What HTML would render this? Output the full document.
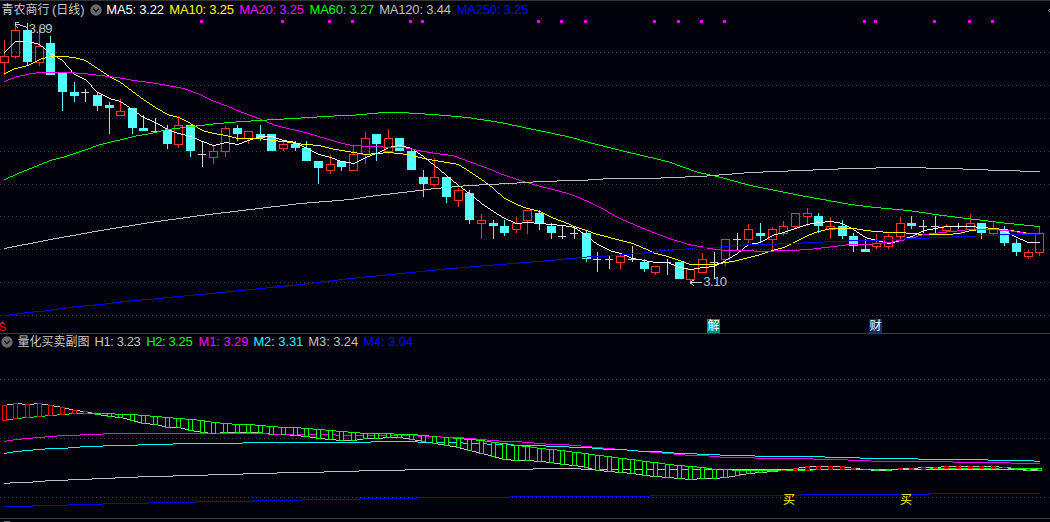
<!DOCTYPE html>
<html><head><meta charset="utf-8"><title>青农商行(日线)</title>
<style>
html,body{margin:0;padding:0;background:#02020c;}
body{width:1050px;height:522px;position:relative;overflow:hidden;font-family:"Liberation Sans","Noto Sans CJK SC",sans-serif;}
.t{position:absolute;font-size:13px;letter-spacing:-0.2px;line-height:16px;white-space:nowrap;}
.c{font-size:12px;letter-spacing:0;}
.tag{position:absolute;width:13px;height:14px;color:#fff;font-size:12px;line-height:14px;text-align:center;overflow:hidden;}
</style></head><body>
<svg width="1050" height="522" viewBox="0 0 1050 522" shape-rendering="crispEdges" style="position:absolute;left:0;top:0"><line x1="0" y1="52.5" x2="1050" y2="52.5" stroke="#404042" stroke-width="1" stroke-dasharray="1 3"/>
<line x1="0" y1="85.5" x2="1050" y2="85.5" stroke="#404042" stroke-width="1" stroke-dasharray="1 3"/>
<line x1="0" y1="118.5" x2="1050" y2="118.5" stroke="#404042" stroke-width="1" stroke-dasharray="1 3"/>
<line x1="0" y1="151.5" x2="1050" y2="151.5" stroke="#404042" stroke-width="1" stroke-dasharray="1 3"/>
<line x1="0" y1="184.5" x2="1050" y2="184.5" stroke="#404042" stroke-width="1" stroke-dasharray="1 3"/>
<line x1="0" y1="216.5" x2="1050" y2="216.5" stroke="#404042" stroke-width="1" stroke-dasharray="1 3"/>
<line x1="0" y1="249.5" x2="1050" y2="249.5" stroke="#404042" stroke-width="1" stroke-dasharray="1 3"/>
<line x1="0" y1="282.5" x2="1050" y2="282.5" stroke="#404042" stroke-width="1" stroke-dasharray="1 3"/>
<line x1="0" y1="315.5" x2="1050" y2="315.5" stroke="#404042" stroke-width="1" stroke-dasharray="1 3"/>
<line x1="0" y1="379.5" x2="1050" y2="379.5" stroke="#404042" stroke-width="1" stroke-dasharray="1 3"/>
<line x1="0" y1="438.5" x2="1050" y2="438.5" stroke="#404042" stroke-width="1" stroke-dasharray="1 3"/>
<line x1="0" y1="497.5" x2="1050" y2="497.5" stroke="#404042" stroke-width="1" stroke-dasharray="1 3"/>
<rect x="0" y="0" width="1050" height="1" fill="#333333"/>
<rect x="0" y="333" width="1050" height="1" fill="#3c3c3c"/>
<rect x="0" y="518" width="1050" height="1" fill="#3c3c3c"/>
<rect x="4" y="40" width="1" height="16" fill="#ff3232"/>
<rect x="4" y="63" width="1" height="12" fill="#ff3232"/>
<path d="M0 56h9v7h-9z M1 57v5h7v-5z" fill="#ff3232" fill-rule="evenodd"/>
<rect x="15" y="26" width="1" height="4" fill="#ff3232"/>
<rect x="15" y="57" width="1" height="2" fill="#ff3232"/>
<path d="M11 30h9v27h-9z M12 31v25h7v-25z" fill="#ff3232" fill-rule="evenodd"/>
<rect x="27" y="23" width="1" height="42" fill="#54ffff"/>
<rect x="23" y="30" width="9" height="32" fill="#54ffff"/>
<rect x="39" y="27" width="1" height="19" fill="#ff3232"/>
<rect x="39" y="63" width="1" height="3" fill="#ff3232"/>
<path d="M35 46h9v17h-9z M36 47v15h7v-15z" fill="#ff3232" fill-rule="evenodd"/>
<rect x="50" y="36" width="1" height="39" fill="#54ffff"/>
<rect x="46" y="43" width="9" height="32" fill="#54ffff"/>
<rect x="62" y="73" width="1" height="38" fill="#54ffff"/>
<rect x="58" y="73" width="9" height="19" fill="#54ffff"/>
<rect x="74" y="82" width="1" height="20" fill="#54ffff"/>
<rect x="70" y="92" width="9" height="4" fill="#54ffff"/>
<rect x="85" y="89" width="1" height="13" fill="#d0d0d0"/>
<rect x="81" y="92" width="8" height="1" fill="#d0d0d0"/>
<rect x="97" y="92" width="1" height="19" fill="#54ffff"/>
<rect x="93" y="95" width="9" height="11" fill="#54ffff"/>
<rect x="109" y="102" width="1" height="32" fill="#54ffff"/>
<rect x="105" y="105" width="9" height="3" fill="#54ffff"/>
<rect x="120" y="99" width="1" height="12" fill="#ff3232"/>
<path d="M116 111h9v5h-9z M117 112v3h7v-3z" fill="#ff3232" fill-rule="evenodd"/>
<rect x="132" y="108" width="1" height="26" fill="#54ffff"/>
<rect x="128" y="108" width="9" height="20" fill="#54ffff"/>
<rect x="143" y="115" width="1" height="16" fill="#54ffff"/>
<rect x="139" y="128" width="9" height="3" fill="#54ffff"/>
<rect x="155" y="118" width="1" height="15" fill="#d0d0d0"/>
<rect x="151" y="131" width="8" height="1" fill="#d0d0d0"/>
<rect x="167" y="125" width="1" height="24" fill="#54ffff"/>
<rect x="163" y="130" width="9" height="14" fill="#54ffff"/>
<rect x="178" y="116" width="1" height="9" fill="#ff3232"/>
<rect x="178" y="145" width="1" height="3" fill="#ff3232"/>
<path d="M174 125h9v20h-9z M175 126v18h7v-18z" fill="#ff3232" fill-rule="evenodd"/>
<rect x="190" y="125" width="1" height="32" fill="#54ffff"/>
<rect x="186" y="125" width="9" height="26" fill="#54ffff"/>
<rect x="202" y="141" width="1" height="26" fill="#d0d0d0"/>
<rect x="198" y="154" width="8" height="1" fill="#d0d0d0"/>
<rect x="213" y="145" width="1" height="6" fill="#ff3232"/>
<rect x="213" y="158" width="1" height="6" fill="#ff3232"/>
<path d="M209 151h9v7h-9z M210 152v5h7v-5z" fill="#ff3232" fill-rule="evenodd"/>
<rect x="225" y="126" width="1" height="2" fill="#ff3232"/>
<rect x="225" y="152" width="1" height="5" fill="#ff3232"/>
<path d="M221 128h9v24h-9z M222 129v22h7v-22z" fill="#ff3232" fill-rule="evenodd"/>
<rect x="237" y="125" width="1" height="16" fill="#54ffff"/>
<rect x="233" y="128" width="9" height="6" fill="#54ffff"/>
<rect x="248" y="139" width="1" height="5" fill="#ff3232"/>
<path d="M244 131h9v8h-9z M245 132v6h7v-6z" fill="#ff3232" fill-rule="evenodd"/>
<rect x="260" y="125" width="1" height="16" fill="#54ffff"/>
<rect x="256" y="134" width="9" height="4" fill="#54ffff"/>
<rect x="271" y="134" width="1" height="17" fill="#54ffff"/>
<rect x="267" y="134" width="9" height="17" fill="#54ffff"/>
<rect x="283" y="141" width="1" height="3" fill="#ff3232"/>
<rect x="283" y="149" width="1" height="2" fill="#ff3232"/>
<path d="M279 144h9v5h-9z M280 145v3h7v-3z" fill="#ff3232" fill-rule="evenodd"/>
<rect x="295" y="141" width="1" height="10" fill="#54ffff"/>
<rect x="291" y="144" width="9" height="4" fill="#54ffff"/>
<rect x="306" y="141" width="1" height="20" fill="#54ffff"/>
<rect x="302" y="148" width="9" height="13" fill="#54ffff"/>
<rect x="318" y="161" width="1" height="23" fill="#54ffff"/>
<rect x="314" y="161" width="9" height="7" fill="#54ffff"/>
<rect x="330" y="155" width="1" height="9" fill="#ff3232"/>
<rect x="330" y="171" width="1" height="3" fill="#ff3232"/>
<path d="M326 164h9v7h-9z M327 165v5h7v-5z" fill="#ff3232" fill-rule="evenodd"/>
<rect x="341" y="161" width="1" height="10" fill="#54ffff"/>
<rect x="337" y="161" width="9" height="6" fill="#54ffff"/>
<rect x="353" y="146" width="1" height="8" fill="#ff3232"/>
<path d="M349 154h9v17h-9z M350 155v15h7v-15z" fill="#ff3232" fill-rule="evenodd"/>
<rect x="365" y="132" width="1" height="6" fill="#ff3232"/>
<rect x="365" y="155" width="1" height="9" fill="#ff3232"/>
<path d="M361 138h9v17h-9z M362 139v15h7v-15z" fill="#ff3232" fill-rule="evenodd"/>
<rect x="376" y="134" width="1" height="27" fill="#54ffff"/>
<rect x="372" y="134" width="9" height="10" fill="#54ffff"/>
<rect x="388" y="129" width="1" height="9" fill="#ff3232"/>
<rect x="388" y="152" width="1" height="2" fill="#ff3232"/>
<path d="M384 138h9v14h-9z M385 139v12h7v-12z" fill="#ff3232" fill-rule="evenodd"/>
<rect x="399" y="138" width="1" height="13" fill="#54ffff"/>
<rect x="395" y="138" width="9" height="13" fill="#54ffff"/>
<rect x="411" y="148" width="1" height="22" fill="#54ffff"/>
<rect x="407" y="151" width="9" height="19" fill="#54ffff"/>
<rect x="423" y="170" width="1" height="27" fill="#54ffff"/>
<rect x="419" y="177" width="9" height="7" fill="#54ffff"/>
<rect x="434" y="158" width="1" height="19" fill="#ff3232"/>
<rect x="434" y="185" width="1" height="2" fill="#ff3232"/>
<path d="M430 177h9v8h-9z M431 178v6h7v-6z" fill="#ff3232" fill-rule="evenodd"/>
<rect x="446" y="177" width="1" height="26" fill="#54ffff"/>
<rect x="442" y="177" width="9" height="20" fill="#54ffff"/>
<rect x="458" y="188" width="1" height="2" fill="#ff3232"/>
<rect x="458" y="201" width="1" height="6" fill="#ff3232"/>
<path d="M454 190h9v11h-9z M455 191v9h7v-9z" fill="#ff3232" fill-rule="evenodd"/>
<rect x="469" y="190" width="1" height="34" fill="#54ffff"/>
<rect x="465" y="193" width="9" height="27" fill="#54ffff"/>
<rect x="481" y="214" width="1" height="6" fill="#ff3232"/>
<rect x="481" y="224" width="1" height="15" fill="#ff3232"/>
<path d="M477 220h9v4h-9z M478 221v2h7v-2z" fill="#ff3232" fill-rule="evenodd"/>
<rect x="493" y="220" width="1" height="19" fill="#54ffff"/>
<rect x="489" y="223" width="9" height="3" fill="#54ffff"/>
<rect x="504" y="220" width="1" height="16" fill="#54ffff"/>
<rect x="500" y="226" width="9" height="7" fill="#54ffff"/>
<rect x="516" y="217" width="1" height="6" fill="#ff3232"/>
<rect x="516" y="230" width="1" height="3" fill="#ff3232"/>
<path d="M512 223h9v7h-9z M513 224v5h7v-5z" fill="#ff3232" fill-rule="evenodd"/>
<rect x="527" y="221" width="1" height="13" fill="#ff3232"/>
<path d="M523 210h9v11h-9z M524 211v9h7v-9z" fill="#ff3232" fill-rule="evenodd"/>
<rect x="539" y="210" width="1" height="20" fill="#54ffff"/>
<rect x="535" y="213" width="9" height="11" fill="#54ffff"/>
<rect x="551" y="223" width="1" height="16" fill="#54ffff"/>
<rect x="547" y="226" width="9" height="7" fill="#54ffff"/>
<rect x="562" y="225" width="1" height="14" fill="#d0d0d0"/>
<rect x="558" y="236" width="8" height="1" fill="#d0d0d0"/>
<rect x="574" y="227" width="1" height="12" fill="#d0d0d0"/>
<rect x="570" y="233" width="8" height="1" fill="#d0d0d0"/>
<rect x="586" y="230" width="1" height="32" fill="#54ffff"/>
<rect x="582" y="233" width="9" height="26" fill="#54ffff"/>
<rect x="597" y="252" width="1" height="20" fill="#d0d0d0"/>
<rect x="593" y="259" width="8" height="1" fill="#d0d0d0"/>
<rect x="609" y="255" width="1" height="14" fill="#d0d0d0"/>
<rect x="605" y="259" width="8" height="1" fill="#d0d0d0"/>
<rect x="620" y="255" width="1" height="1" fill="#ff3232"/>
<rect x="620" y="263" width="1" height="6" fill="#ff3232"/>
<path d="M616 256h9v7h-9z M617 257v5h7v-5z" fill="#ff3232" fill-rule="evenodd"/>
<rect x="632" y="246" width="1" height="16" fill="#d0d0d0"/>
<rect x="628" y="259" width="8" height="1" fill="#d0d0d0"/>
<rect x="644" y="259" width="1" height="13" fill="#54ffff"/>
<rect x="640" y="262" width="9" height="7" fill="#54ffff"/>
<rect x="655" y="273" width="1" height="2" fill="#ff3232"/>
<path d="M651 266h9v7h-9z M652 267v5h7v-5z" fill="#ff3232" fill-rule="evenodd"/>
<rect x="667" y="259" width="1" height="16" fill="#d0d0d0"/>
<rect x="663" y="262" width="8" height="1" fill="#d0d0d0"/>
<rect x="679" y="262" width="1" height="17" fill="#54ffff"/>
<rect x="675" y="262" width="9" height="17" fill="#54ffff"/>
<rect x="690" y="280" width="1" height="4" fill="#ff3232"/>
<path d="M686 269h9v11h-9z M687 270v9h7v-9z" fill="#ff3232" fill-rule="evenodd"/>
<rect x="702" y="253" width="1" height="6" fill="#ff3232"/>
<path d="M698 259h9v14h-9z M699 260v12h7v-12z" fill="#ff3232" fill-rule="evenodd"/>
<rect x="714" y="252" width="1" height="27" fill="#d0d0d0"/>
<rect x="710" y="262" width="8" height="1" fill="#d0d0d0"/>
<rect x="725" y="260" width="1" height="6" fill="#ff3232"/>
<path d="M721 239h9v21h-9z M722 240v19h7v-19z" fill="#ff3232" fill-rule="evenodd"/>
<rect x="737" y="233" width="1" height="17" fill="#d0d0d0"/>
<rect x="733" y="239" width="8" height="1" fill="#d0d0d0"/>
<rect x="748" y="224" width="1" height="5" fill="#ff3232"/>
<rect x="748" y="240" width="1" height="3" fill="#ff3232"/>
<path d="M744 229h9v11h-9z M745 230v9h7v-9z" fill="#ff3232" fill-rule="evenodd"/>
<rect x="760" y="223" width="1" height="20" fill="#54ffff"/>
<rect x="756" y="233" width="9" height="3" fill="#54ffff"/>
<rect x="772" y="227" width="1" height="2" fill="#ff3232"/>
<rect x="772" y="240" width="1" height="10" fill="#ff3232"/>
<path d="M768 229h9v11h-9z M769 230v9h7v-9z" fill="#ff3232" fill-rule="evenodd"/>
<rect x="783" y="221" width="1" height="5" fill="#ff3232"/>
<rect x="783" y="234" width="1" height="2" fill="#ff3232"/>
<path d="M779 226h9v8h-9z M780 227v6h7v-6z" fill="#ff3232" fill-rule="evenodd"/>
<rect x="795" y="227" width="1" height="2" fill="#ff3232"/>
<path d="M791 213h9v14h-9z M792 214v12h7v-12z" fill="#ff3232" fill-rule="evenodd"/>
<rect x="807" y="208" width="1" height="5" fill="#ff3232"/>
<rect x="807" y="217" width="1" height="9" fill="#ff3232"/>
<path d="M803 213h9v4h-9z M804 214v2h7v-2z" fill="#ff3232" fill-rule="evenodd"/>
<rect x="818" y="213" width="1" height="20" fill="#54ffff"/>
<rect x="814" y="216" width="9" height="10" fill="#54ffff"/>
<rect x="830" y="217" width="1" height="9" fill="#ff3232"/>
<rect x="830" y="230" width="1" height="9" fill="#ff3232"/>
<path d="M826 226h9v4h-9z M827 227v2h7v-2z" fill="#ff3232" fill-rule="evenodd"/>
<rect x="842" y="220" width="1" height="19" fill="#54ffff"/>
<rect x="838" y="226" width="9" height="10" fill="#54ffff"/>
<rect x="853" y="233" width="1" height="19" fill="#54ffff"/>
<rect x="849" y="236" width="9" height="10" fill="#54ffff"/>
<rect x="865" y="239" width="1" height="13" fill="#54ffff"/>
<rect x="861" y="249" width="9" height="3" fill="#54ffff"/>
<rect x="876" y="234" width="1" height="9" fill="#ff3232"/>
<rect x="876" y="247" width="1" height="2" fill="#ff3232"/>
<path d="M872 243h9v4h-9z M873 244v2h7v-2z" fill="#ff3232" fill-rule="evenodd"/>
<rect x="888" y="234" width="1" height="2" fill="#ff3232"/>
<rect x="888" y="247" width="1" height="2" fill="#ff3232"/>
<path d="M884 236h9v11h-9z M885 237v9h7v-9z" fill="#ff3232" fill-rule="evenodd"/>
<rect x="900" y="217" width="1" height="6" fill="#ff3232"/>
<rect x="900" y="237" width="1" height="2" fill="#ff3232"/>
<path d="M896 223h9v14h-9z M897 224v12h7v-12z" fill="#ff3232" fill-rule="evenodd"/>
<rect x="911" y="216" width="1" height="13" fill="#54ffff"/>
<rect x="907" y="223" width="9" height="3" fill="#54ffff"/>
<rect x="923" y="220" width="1" height="13" fill="#d0d0d0"/>
<rect x="919" y="226" width="8" height="1" fill="#d0d0d0"/>
<rect x="935" y="216" width="1" height="18" fill="#d0d0d0"/>
<rect x="931" y="226" width="8" height="1" fill="#d0d0d0"/>
<rect x="946" y="224" width="1" height="2" fill="#ff3232"/>
<rect x="946" y="231" width="1" height="2" fill="#ff3232"/>
<path d="M942 226h9v5h-9z M943 227v3h7v-3z" fill="#ff3232" fill-rule="evenodd"/>
<rect x="958" y="223" width="1" height="6" fill="#d0d0d0"/>
<rect x="954" y="226" width="8" height="1" fill="#d0d0d0"/>
<rect x="970" y="214" width="1" height="9" fill="#ff3232"/>
<rect x="970" y="230" width="1" height="1" fill="#ff3232"/>
<path d="M966 223h9v7h-9z M967 224v5h7v-5z" fill="#ff3232" fill-rule="evenodd"/>
<rect x="981" y="223" width="1" height="16" fill="#54ffff"/>
<rect x="977" y="223" width="9" height="10" fill="#54ffff"/>
<rect x="993" y="221" width="1" height="7" fill="#ff3232"/>
<rect x="993" y="234" width="1" height="2" fill="#ff3232"/>
<path d="M989 228h9v6h-9z M990 229v4h7v-4z" fill="#ff3232" fill-rule="evenodd"/>
<rect x="1004" y="226" width="1" height="20" fill="#54ffff"/>
<rect x="1000" y="230" width="9" height="13" fill="#54ffff"/>
<rect x="1016" y="239" width="1" height="17" fill="#54ffff"/>
<rect x="1012" y="243" width="9" height="9" fill="#54ffff"/>
<rect x="1028" y="250" width="1" height="2" fill="#ff3232"/>
<rect x="1028" y="257" width="1" height="2" fill="#ff3232"/>
<path d="M1024 252h9v5h-9z M1025 253v3h7v-3z" fill="#ff3232" fill-rule="evenodd"/>
<rect x="1039" y="227" width="1" height="6" fill="#ff3232"/>
<rect x="1039" y="253" width="1" height="3" fill="#ff3232"/>
<path d="M1035 233h9v20h-9z M1036 234v18h7v-18z" fill="#ff3232" fill-rule="evenodd"/>
<rect x="200" y="20" width="3" height="3" fill="#ff00ff"/>
<rect x="281" y="20" width="3" height="3" fill="#ff00ff"/>
<rect x="328" y="20" width="3" height="3" fill="#ff00ff"/>
<rect x="351" y="20" width="3" height="3" fill="#ff00ff"/>
<rect x="409" y="20" width="3" height="3" fill="#ff00ff"/>
<rect x="421" y="20" width="3" height="3" fill="#ff00ff"/>
<rect x="537" y="20" width="3" height="3" fill="#ff00ff"/>
<rect x="560" y="20" width="3" height="3" fill="#ff00ff"/>
<rect x="584" y="20" width="3" height="3" fill="#ff00ff"/>
<rect x="653" y="20" width="3" height="3" fill="#ff00ff"/>
<rect x="677" y="20" width="3" height="3" fill="#ff00ff"/>
<rect x="700" y="20" width="3" height="3" fill="#ff00ff"/>
<rect x="723" y="20" width="3" height="3" fill="#ff00ff"/>
<rect x="863" y="20" width="3" height="3" fill="#ff00ff"/>
<rect x="874" y="20" width="3" height="3" fill="#ff00ff"/>
<rect x="933" y="20" width="3" height="3" fill="#ff00ff"/>
<rect x="968" y="20" width="3" height="3" fill="#ff00ff"/>
<rect x="991" y="20" width="3" height="3" fill="#ff00ff"/>
<path d="M15 41h15v1h-15zM14 42h1v1h-1zM30 42h4v1h-4zM13 43h1v1h-1zM34 43h4v1h-4zM12 44h1v1h-1zM38 44h2v1h-2zM11 45h1v1h-1zM40 45h1v1h-1zM10 46h1v1h-1zM41 46h2v1h-2zM9 47h1v1h-1zM43 47h1v1h-1zM8 48h1v1h-1zM44 48h1v1h-1zM7 49h1v1h-1zM45 49h1v1h-1zM6 50h1v1h-1zM46 50h1v1h-1zM5 51h1v1h-1zM47 51h2v1h-2zM4 52h1v1h-1zM49 52h1v1h-1zM50 53h1v1h-1zM51 54h2v1h-2zM53 55h2v1h-2zM55 56h2v1h-2zM57 57h1v1h-1zM58 58h2v1h-2zM60 59h2v1h-2zM62 60h1v1h-1zM63 61h1v1h-1zM64 62h1v1h-1zM65 63h1v1h-1zM65 64h1v1h-1zM66 65h1v1h-1zM67 66h1v1h-1zM68 67h1v1h-1zM69 68h1v1h-1zM70 69h1v1h-1zM71 70h1v1h-1zM71 71h1v1h-1zM72 72h1v1h-1zM73 73h1v1h-1zM74 74h2v1h-2zM76 75h2v1h-2zM78 76h2v1h-2zM80 77h2v1h-2zM82 78h2v1h-2zM84 79h2v1h-2zM86 80h1v1h-1zM87 81h1v1h-1zM88 82h1v1h-1zM89 83h1v1h-1zM90 84h1v1h-1zM91 85h1v1h-1zM91 86h1v1h-1zM92 87h1v1h-1zM93 88h1v1h-1zM94 89h1v1h-1zM95 90h1v1h-1zM96 91h1v1h-1zM97 92h2v1h-2zM99 93h2v1h-2zM101 94h2v1h-2zM103 95h2v1h-2zM105 96h2v1h-2zM107 97h2v1h-2zM109 98h2v1h-2zM111 99h4v1h-4zM115 100h4v1h-4zM119 101h2v1h-2zM121 102h2v1h-2zM123 103h1v1h-1zM124 104h2v1h-2zM126 105h1v1h-1zM127 106h2v1h-2zM129 107h1v1h-1zM130 108h2v1h-2zM132 109h1v1h-1zM133 110h2v1h-2zM135 111h1v1h-1zM136 112h1v1h-1zM137 113h2v1h-2zM139 114h1v1h-1zM140 115h1v1h-1zM141 116h2v1h-2zM143 117h2v1h-2zM145 118h2v1h-2zM147 119h3v1h-3zM150 120h2v1h-2zM152 121h2v1h-2zM154 122h2v1h-2zM156 123h2v1h-2zM158 124h2v1h-2zM160 125h2v1h-2zM162 126h1v1h-1zM163 127h2v1h-2zM165 128h2v1h-2zM167 129h2v1h-2zM169 130h3v1h-3zM172 131h2v1h-2zM174 132h3v1h-3zM177 133h4v1h-4zM181 134h4v1h-4zM185 135h4v1h-4zM189 136h3v1h-3zM259 136h14v1h-14zM192 137h2v1h-2zM256 137h3v1h-3zM273 137h3v1h-3zM194 138h3v1h-3zM253 138h3v1h-3zM276 138h3v1h-3zM197 139h2v1h-2zM250 139h3v1h-3zM279 139h3v1h-3zM199 140h2v1h-2zM247 140h3v1h-3zM282 140h5v1h-5zM201 141h3v1h-3zM244 141h3v1h-3zM287 141h6v1h-6zM204 142h3v1h-3zM224 142h5v1h-5zM242 142h2v1h-2zM293 142h3v1h-3zM207 143h2v1h-2zM220 143h4v1h-4zM229 143h6v1h-6zM239 143h3v1h-3zM296 143h2v1h-2zM209 144h3v1h-3zM216 144h4v1h-4zM235 144h4v1h-4zM298 144h2v1h-2zM212 145h4v1h-4zM300 145h2v1h-2zM397 145h5v1h-5zM302 146h2v1h-2zM391 146h6v1h-6zM402 146h4v1h-4zM304 147h2v1h-2zM388 147h3v1h-3zM406 147h4v1h-4zM306 148h2v1h-2zM386 148h2v1h-2zM410 148h2v1h-2zM308 149h2v1h-2zM384 149h2v1h-2zM412 149h2v1h-2zM310 150h2v1h-2zM382 150h2v1h-2zM414 150h1v1h-1zM312 151h2v1h-2zM380 151h2v1h-2zM415 151h2v1h-2zM314 152h2v1h-2zM378 152h2v1h-2zM417 152h1v1h-1zM316 153h2v1h-2zM375 153h3v1h-3zM418 153h2v1h-2zM318 154h3v1h-3zM372 154h3v1h-3zM420 154h1v1h-1zM321 155h4v1h-4zM370 155h2v1h-2zM421 155h2v1h-2zM325 156h4v1h-4zM367 156h3v1h-3zM423 156h1v1h-1zM329 157h3v1h-3zM365 157h2v1h-2zM424 157h1v1h-1zM332 158h3v1h-3zM363 158h2v1h-2zM425 158h2v1h-2zM335 159h2v1h-2zM361 159h2v1h-2zM427 159h1v1h-1zM337 160h3v1h-3zM359 160h2v1h-2zM428 160h1v1h-1zM340 161h5v1h-5zM357 161h2v1h-2zM429 161h1v1h-1zM345 162h6v1h-6zM355 162h2v1h-2zM430 162h1v1h-1zM351 163h4v1h-4zM431 163h2v1h-2zM433 164h1v1h-1zM434 165h1v1h-1zM435 166h1v1h-1zM436 167h2v1h-2zM438 168h1v1h-1zM439 169h1v1h-1zM440 170h1v1h-1zM441 171h1v1h-1zM442 172h2v1h-2zM444 173h1v1h-1zM445 174h1v1h-1zM446 175h1v1h-1zM447 176h1v1h-1zM448 177h2v1h-2zM450 178h1v1h-1zM451 179h1v1h-1zM452 180h1v1h-1zM453 181h1v1h-1zM454 182h2v1h-2zM456 183h1v1h-1zM457 184h1v1h-1zM458 185h1v1h-1zM459 186h2v1h-2zM461 187h1v1h-1zM462 188h1v1h-1zM463 189h2v1h-2zM465 190h1v1h-1zM466 191h1v1h-1zM467 192h2v1h-2zM469 193h1v1h-1zM470 194h1v1h-1zM471 195h2v1h-2zM473 196h1v1h-1zM474 197h1v1h-1zM475 198h1v1h-1zM476 199h1v1h-1zM477 200h2v1h-2zM479 201h1v1h-1zM480 202h1v1h-1zM481 203h1v1h-1zM482 204h2v1h-2zM484 205h1v1h-1zM485 206h2v1h-2zM487 207h1v1h-1zM488 208h2v1h-2zM490 209h1v1h-1zM491 210h2v1h-2zM493 211h1v1h-1zM494 212h2v1h-2zM496 213h1v1h-1zM497 214h2v1h-2zM499 215h2v1h-2zM501 216h1v1h-1zM502 217h2v1h-2zM504 218h2v1h-2zM506 219h2v1h-2zM508 220h3v1h-3zM511 221h2v1h-2zM825 221h9v1h-9zM513 222h2v1h-2zM522 222h12v1h-12zM816 222h9v1h-9zM834 222h6v1h-6zM515 223h7v1h-7zM534 223h12v1h-12zM810 223h6v1h-6zM840 223h3v1h-3zM546 224h11v1h-11zM806 224h4v1h-4zM843 224h2v1h-2zM557 225h9v1h-9zM803 225h3v1h-3zM845 225h2v1h-2zM566 226h6v1h-6zM800 226h3v1h-3zM847 226h2v1h-2zM944 226h32v1h-32zM572 227h3v1h-3zM797 227h3v1h-3zM849 227h2v1h-2zM938 227h6v1h-6zM976 227h12v1h-12zM575 228h2v1h-2zM794 228h3v1h-3zM851 228h2v1h-2zM933 228h5v1h-5zM988 228h7v1h-7zM577 229h1v1h-1zM791 229h3v1h-3zM853 229h1v1h-1zM927 229h6v1h-6zM995 229h4v1h-4zM578 230h2v1h-2zM788 230h3v1h-3zM854 230h2v1h-2zM923 230h4v1h-4zM999 230h4v1h-4zM580 231h1v1h-1zM785 231h3v1h-3zM856 231h1v1h-1zM921 231h2v1h-2zM1003 231h3v1h-3zM581 232h2v1h-2zM782 232h3v1h-3zM857 232h2v1h-2zM919 232h2v1h-2zM1006 232h2v1h-2zM583 233h1v1h-1zM778 233h4v1h-4zM859 233h1v1h-1zM917 233h2v1h-2zM1008 233h2v1h-2zM584 234h2v1h-2zM774 234h4v1h-4zM860 234h2v1h-2zM915 234h2v1h-2zM1010 234h2v1h-2zM586 235h1v1h-1zM772 235h2v1h-2zM862 235h1v1h-1zM913 235h2v1h-2zM1012 235h2v1h-2zM587 236h1v1h-1zM770 236h2v1h-2zM863 236h2v1h-2zM910 236h3v1h-3zM1014 236h2v1h-2zM588 237h2v1h-2zM768 237h2v1h-2zM865 237h2v1h-2zM907 237h3v1h-3zM1016 237h2v1h-2zM590 238h1v1h-1zM767 238h1v1h-1zM867 238h4v1h-4zM905 238h2v1h-2zM1018 238h2v1h-2zM591 239h1v1h-1zM765 239h2v1h-2zM871 239h4v1h-4zM902 239h3v1h-3zM1020 239h3v1h-3zM592 240h1v1h-1zM763 240h2v1h-2zM875 240h4v1h-4zM899 240h3v1h-3zM1023 240h2v1h-2zM593 241h1v1h-1zM761 241h2v1h-2zM879 241h4v1h-4zM895 241h4v1h-4zM1025 241h2v1h-2zM594 242h2v1h-2zM758 242h3v1h-3zM883 242h4v1h-4zM891 242h4v1h-4zM1027 242h13v1h-13zM596 243h1v1h-1zM752 243h6v1h-6zM887 243h4v1h-4zM597 244h2v1h-2zM748 244h4v1h-4zM599 245h2v1h-2zM747 245h1v1h-1zM601 246h2v1h-2zM745 246h2v1h-2zM603 247h2v1h-2zM744 247h1v1h-1zM605 248h2v1h-2zM743 248h1v1h-1zM607 249h2v1h-2zM742 249h1v1h-1zM609 250h2v1h-2zM741 250h1v1h-1zM611 251h4v1h-4zM739 251h2v1h-2zM615 252h4v1h-4zM738 252h1v1h-1zM619 253h3v1h-3zM737 253h1v1h-1zM622 254h2v1h-2zM735 254h2v1h-2zM624 255h3v1h-3zM733 255h2v1h-2zM627 256h2v1h-2zM732 256h1v1h-1zM629 257h2v1h-2zM730 257h2v1h-2zM631 258h5v1h-5zM728 258h2v1h-2zM636 259h6v1h-6zM726 259h2v1h-2zM642 260h5v1h-5zM725 260h1v1h-1zM647 261h6v1h-6zM723 261h2v1h-2zM653 262h16v1h-16zM721 262h2v1h-2zM669 263h2v1h-2zM719 263h2v1h-2zM671 264h3v1h-3zM717 264h2v1h-2zM674 265h2v1h-2zM715 265h2v1h-2zM676 266h2v1h-2zM709 266h6v1h-6zM678 267h4v1h-4zM700 267h9v1h-9zM682 268h6v1h-6zM694 268h6v1h-6zM688 269h6v1h-6z" fill="#ffffff"/>
<path d="M49 56h20v1h-20zM45 57h4v1h-4zM69 57h7v1h-7zM41 58h4v1h-4zM76 58h4v1h-4zM39 59h2v1h-2zM80 59h4v1h-4zM37 60h2v1h-2zM84 60h2v1h-2zM35 61h2v1h-2zM86 61h2v1h-2zM33 62h2v1h-2zM88 62h1v1h-1zM31 63h2v1h-2zM89 63h2v1h-2zM29 64h2v1h-2zM91 64h1v1h-1zM26 65h3v1h-3zM92 65h2v1h-2zM22 66h4v1h-4zM94 66h1v1h-1zM18 67h4v1h-4zM95 67h2v1h-2zM14 68h4v1h-4zM97 68h1v1h-1zM12 69h2v1h-2zM98 69h2v1h-2zM10 70h2v1h-2zM100 70h1v1h-1zM8 71h2v1h-2zM101 71h2v1h-2zM6 72h2v1h-2zM103 72h1v1h-1zM4 73h2v1h-2zM104 73h2v1h-2zM106 74h1v1h-1zM107 75h2v1h-2zM109 76h1v1h-1zM110 77h2v1h-2zM112 78h2v1h-2zM114 79h2v1h-2zM116 80h2v1h-2zM118 81h2v1h-2zM120 82h1v1h-1zM121 83h2v1h-2zM123 84h1v1h-1zM124 85h1v1h-1zM125 86h2v1h-2zM127 87h1v1h-1zM128 88h1v1h-1zM129 89h2v1h-2zM131 90h1v1h-1zM132 91h1v1h-1zM133 92h2v1h-2zM135 93h1v1h-1zM136 94h1v1h-1zM137 95h2v1h-2zM139 96h1v1h-1zM140 97h1v1h-1zM141 98h2v1h-2zM143 99h1v1h-1zM144 100h2v1h-2zM146 101h1v1h-1zM147 102h2v1h-2zM149 103h1v1h-1zM150 104h2v1h-2zM152 105h1v1h-1zM153 106h2v1h-2zM155 107h1v1h-1zM156 108h2v1h-2zM158 109h2v1h-2zM160 110h2v1h-2zM162 111h1v1h-1zM163 112h2v1h-2zM165 113h2v1h-2zM167 114h2v1h-2zM169 115h4v1h-4zM173 116h4v1h-4zM177 117h3v1h-3zM180 118h2v1h-2zM182 119h2v1h-2zM184 120h2v1h-2zM186 121h2v1h-2zM188 122h2v1h-2zM190 123h1v1h-1zM191 124h2v1h-2zM193 125h2v1h-2zM195 126h2v1h-2zM197 127h1v1h-1zM198 128h2v1h-2zM200 129h2v1h-2zM202 130h2v1h-2zM204 131h4v1h-4zM208 132h4v1h-4zM212 133h5v1h-5zM217 134h6v1h-6zM223 135h5v1h-5zM228 136h4v1h-4zM232 137h4v1h-4zM236 138h27v1h-27zM263 139h6v1h-6zM269 140h9v1h-9zM278 141h9v1h-9zM287 142h6v1h-6zM293 143h8v1h-8zM301 144h12v1h-12zM313 145h8v1h-8zM321 146h4v1h-4zM325 147h4v1h-4zM329 148h4v1h-4zM333 149h6v1h-6zM339 150h6v1h-6zM345 151h6v1h-6zM351 152h6v1h-6zM383 152h11v1h-11zM357 153h6v1h-6zM371 153h12v1h-12zM394 153h9v1h-9zM363 154h8v1h-8zM403 154h6v1h-6zM409 155h5v1h-5zM414 156h4v1h-4zM418 157h4v1h-4zM422 158h4v1h-4zM426 159h6v1h-6zM432 160h6v1h-6zM438 161h6v1h-6zM444 162h6v1h-6zM450 163h6v1h-6zM456 164h3v1h-3zM459 165h2v1h-2zM461 166h1v1h-1zM462 167h2v1h-2zM464 168h2v1h-2zM466 169h1v1h-1zM467 170h2v1h-2zM469 171h1v1h-1zM470 172h2v1h-2zM472 173h1v1h-1zM473 174h2v1h-2zM475 175h1v1h-1zM476 176h2v1h-2zM478 177h1v1h-1zM479 178h2v1h-2zM481 179h1v1h-1zM482 180h2v1h-2zM484 181h1v1h-1zM485 182h1v1h-1zM486 183h2v1h-2zM488 184h1v1h-1zM489 185h1v1h-1zM490 186h2v1h-2zM492 187h1v1h-1zM493 188h1v1h-1zM494 189h1v1h-1zM495 190h1v1h-1zM496 191h1v1h-1zM497 192h1v1h-1zM498 193h2v1h-2zM500 194h1v1h-1zM501 195h1v1h-1zM502 196h1v1h-1zM503 197h1v1h-1zM504 198h2v1h-2zM506 199h2v1h-2zM508 200h2v1h-2zM510 201h2v1h-2zM512 202h2v1h-2zM514 203h2v1h-2zM516 204h2v1h-2zM518 205h3v1h-3zM521 206h2v1h-2zM523 207h3v1h-3zM526 208h4v1h-4zM530 209h4v1h-4zM534 210h4v1h-4zM538 211h3v1h-3zM541 212h2v1h-2zM543 213h2v1h-2zM545 214h2v1h-2zM547 215h2v1h-2zM549 216h2v1h-2zM551 217h2v1h-2zM553 218h3v1h-3zM556 219h2v1h-2zM558 220h3v1h-3zM561 221h3v1h-3zM564 222h2v1h-2zM566 223h3v1h-3zM569 224h2v1h-2zM571 225h2v1h-2zM573 226h3v1h-3zM576 227h3v1h-3zM579 228h3v1h-3zM829 228h28v1h-28zM988 228h11v1h-11zM582 229h3v1h-3zM825 229h4v1h-4zM857 229h6v1h-6zM976 229h12v1h-12zM999 229h9v1h-9zM585 230h3v1h-3zM821 230h4v1h-4zM863 230h8v1h-8zM969 230h7v1h-7zM1008 230h6v1h-6zM588 231h3v1h-3zM817 231h4v1h-4zM871 231h12v1h-12zM965 231h4v1h-4zM1014 231h6v1h-6zM591 232h2v1h-2zM814 232h3v1h-3zM883 232h23v1h-23zM961 232h4v1h-4zM1020 232h6v1h-6zM593 233h3v1h-3zM812 233h2v1h-2zM906 233h12v1h-12zM953 233h8v1h-8zM1026 233h8v1h-8zM596 234h4v1h-4zM809 234h3v1h-3zM918 234h35v1h-35zM1034 234h6v1h-6zM600 235h4v1h-4zM807 235h2v1h-2zM604 236h4v1h-4zM805 236h2v1h-2zM608 237h3v1h-3zM803 237h2v1h-2zM611 238h4v1h-4zM801 238h2v1h-2zM615 239h4v1h-4zM799 239h2v1h-2zM619 240h4v1h-4zM797 240h2v1h-2zM623 241h4v1h-4zM795 241h2v1h-2zM627 242h4v1h-4zM793 242h2v1h-2zM631 243h3v1h-3zM791 243h2v1h-2zM634 244h2v1h-2zM789 244h2v1h-2zM636 245h3v1h-3zM787 245h2v1h-2zM639 246h2v1h-2zM785 246h2v1h-2zM641 247h2v1h-2zM782 247h3v1h-3zM643 248h3v1h-3zM778 248h4v1h-4zM646 249h2v1h-2zM774 249h4v1h-4zM648 250h2v1h-2zM771 250h3v1h-3zM650 251h2v1h-2zM768 251h3v1h-3zM652 252h2v1h-2zM765 252h3v1h-3zM654 253h4v1h-4zM762 253h3v1h-3zM658 254h4v1h-4zM759 254h3v1h-3zM662 255h4v1h-4zM755 255h4v1h-4zM666 256h3v1h-3zM751 256h4v1h-4zM669 257h3v1h-3zM747 257h4v1h-4zM672 258h3v1h-3zM743 258h4v1h-4zM675 259h3v1h-3zM739 259h4v1h-4zM678 260h3v1h-3zM735 260h4v1h-4zM681 261h3v1h-3zM729 261h6v1h-6zM684 262h2v1h-2zM723 262h6v1h-6zM686 263h3v1h-3zM717 263h6v1h-6zM689 264h28v1h-28z" fill="#ffff00"/>
<path d="M36 72h40v1h-40zM29 73h7v1h-7zM76 73h12v1h-12zM25 74h4v1h-4zM88 74h8v1h-8zM20 75h5v1h-5zM96 75h9v1h-9zM16 76h4v1h-4zM105 76h8v1h-8zM14 77h2v1h-2zM113 77h7v1h-7zM11 78h3v1h-3zM120 78h6v1h-6zM8 79h3v1h-3zM126 79h5v1h-5zM6 80h2v1h-2zM131 80h7v1h-7zM4 81h2v1h-2zM138 81h8v1h-8zM146 82h7v1h-7zM153 83h6v1h-6zM159 84h6v1h-6zM165 85h5v1h-5zM170 86h6v1h-6zM176 87h5v1h-5zM181 88h4v1h-4zM185 89h3v1h-3zM188 90h3v1h-3zM191 91h2v1h-2zM193 92h3v1h-3zM196 93h3v1h-3zM199 94h2v1h-2zM201 95h2v1h-2zM203 96h2v1h-2zM205 97h2v1h-2zM207 98h2v1h-2zM209 99h2v1h-2zM211 100h2v1h-2zM213 101h3v1h-3zM216 102h3v1h-3zM219 103h2v1h-2zM221 104h3v1h-3zM224 105h3v1h-3zM227 106h2v1h-2zM229 107h3v1h-3zM232 108h2v1h-2zM234 109h2v1h-2zM236 110h3v1h-3zM239 111h2v1h-2zM241 112h3v1h-3zM244 113h3v1h-3zM247 114h2v1h-2zM249 115h3v1h-3zM252 116h3v1h-3zM255 117h2v1h-2zM257 118h3v1h-3zM260 119h2v1h-2zM262 120h3v1h-3zM265 121h2v1h-2zM267 122h2v1h-2zM269 123h3v1h-3zM272 124h2v1h-2zM274 125h4v1h-4zM278 126h4v1h-4zM282 127h4v1h-4zM286 128h4v1h-4zM290 129h5v1h-5zM295 130h4v1h-4zM299 131h4v1h-4zM303 132h4v1h-4zM307 133h3v1h-3zM310 134h4v1h-4zM314 135h3v1h-3zM317 136h3v1h-3zM320 137h4v1h-4zM324 138h3v1h-3zM327 139h4v1h-4zM331 140h3v1h-3zM334 141h3v1h-3zM337 142h4v1h-4zM341 143h4v1h-4zM345 144h5v1h-5zM350 145h11v1h-11zM361 146h22v1h-22zM383 147h23v1h-23zM406 148h5v1h-5zM411 149h5v1h-5zM416 150h5v1h-5zM421 151h6v1h-6zM427 152h6v1h-6zM433 153h7v1h-7zM440 154h8v1h-8zM448 155h6v1h-6zM454 156h3v1h-3zM457 157h2v1h-2zM459 158h3v1h-3zM462 159h3v1h-3zM465 160h2v1h-2zM467 161h3v1h-3zM470 162h3v1h-3zM473 163h3v1h-3zM476 164h2v1h-2zM478 165h3v1h-3zM481 166h3v1h-3zM484 167h3v1h-3zM487 168h2v1h-2zM489 169h3v1h-3zM492 170h2v1h-2zM494 171h2v1h-2zM496 172h3v1h-3zM499 173h2v1h-2zM501 174h3v1h-3zM504 175h3v1h-3zM507 176h3v1h-3zM510 177h3v1h-3zM513 178h3v1h-3zM516 179h3v1h-3zM519 180h3v1h-3zM522 181h3v1h-3zM525 182h4v1h-4zM529 183h3v1h-3zM532 184h3v1h-3zM535 185h4v1h-4zM539 186h4v1h-4zM543 187h4v1h-4zM547 188h4v1h-4zM551 189h4v1h-4zM555 190h4v1h-4zM559 191h3v1h-3zM562 192h4v1h-4zM566 193h3v1h-3zM569 194h3v1h-3zM572 195h3v1h-3zM575 196h2v1h-2zM577 197h3v1h-3zM580 198h2v1h-2zM582 199h2v1h-2zM584 200h3v1h-3zM587 201h2v1h-2zM589 202h2v1h-2zM591 203h2v1h-2zM593 204h2v1h-2zM595 205h2v1h-2zM597 206h2v1h-2zM599 207h2v1h-2zM601 208h2v1h-2zM603 209h2v1h-2zM605 210h2v1h-2zM607 211h1v1h-1zM608 212h2v1h-2zM610 213h2v1h-2zM612 214h1v1h-1zM613 215h2v1h-2zM615 216h2v1h-2zM617 217h2v1h-2zM619 218h2v1h-2zM621 219h2v1h-2zM623 220h3v1h-3zM626 221h2v1h-2zM628 222h2v1h-2zM630 223h3v1h-3zM633 224h2v1h-2zM635 225h2v1h-2zM637 226h3v1h-3zM640 227h2v1h-2zM642 228h3v1h-3zM645 229h2v1h-2zM965 229h34v1h-34zM647 230h3v1h-3zM957 230h8v1h-8zM999 230h12v1h-12zM650 231h2v1h-2zM946 231h11v1h-11zM1011 231h6v1h-6zM652 232h3v1h-3zM938 232h8v1h-8zM1017 232h6v1h-6zM655 233h2v1h-2zM929 233h9v1h-9zM1023 233h17v1h-17zM657 234h3v1h-3zM922 234h7v1h-7zM660 235h3v1h-3zM918 235h4v1h-4zM663 236h3v1h-3zM916 236h2v1h-2zM666 237h2v1h-2zM910 237h6v1h-6zM668 238h3v1h-3zM905 238h5v1h-5zM671 239h3v1h-3zM904 239h1v1h-1zM674 240h3v1h-3zM896 240h8v1h-8zM677 241h4v1h-4zM893 241h3v1h-3zM681 242h3v1h-3zM882 242h11v1h-11zM684 243h3v1h-3zM872 243h10v1h-10zM687 244h4v1h-4zM846 244h26v1h-26zM691 245h6v1h-6zM838 245h8v1h-8zM697 246h6v1h-6zM830 246h8v1h-8zM703 247h4v1h-4zM821 247h9v1h-9zM707 248h6v1h-6zM813 248h8v1h-8zM713 249h8v1h-8zM799 249h14v1h-14zM721 250h33v1h-33zM774 250h25v1h-25zM754 251h20v1h-20z" fill="#ff00ff"/>
<path d="M378 112h31v1h-31zM367 113h11v1h-11zM409 113h16v1h-16zM356 114h11v1h-11zM425 114h14v1h-14zM334 115h22v1h-22zM439 115h12v1h-12zM317 116h17v1h-17zM451 116h11v1h-11zM301 117h16v1h-16zM462 117h9v1h-9zM284 118h17v1h-17zM471 118h6v1h-6zM267 119h17v1h-17zM477 119h7v1h-7zM251 120h16v1h-16zM484 120h7v1h-7zM236 121h15v1h-15zM491 121h6v1h-6zM224 122h12v1h-12zM497 122h6v1h-6zM213 123h11v1h-11zM503 123h5v1h-5zM205 124h8v1h-8zM508 124h4v1h-4zM196 125h9v1h-9zM512 125h5v1h-5zM188 126h8v1h-8zM517 126h5v1h-5zM180 127h8v1h-8zM522 127h4v1h-4zM172 128h8v1h-8zM526 128h5v1h-5zM165 129h7v1h-7zM531 129h5v1h-5zM161 130h4v1h-4zM536 130h5v1h-5zM157 131h4v1h-4zM541 131h5v1h-5zM153 132h4v1h-4zM546 132h5v1h-5zM148 133h5v1h-5zM551 133h4v1h-4zM142 134h6v1h-6zM555 134h5v1h-5zM136 135h6v1h-6zM560 135h5v1h-5zM132 136h4v1h-4zM565 136h4v1h-4zM128 137h4v1h-4zM569 137h4v1h-4zM124 138h4v1h-4zM573 138h4v1h-4zM120 139h4v1h-4zM577 139h3v1h-3zM115 140h5v1h-5zM580 140h4v1h-4zM111 141h4v1h-4zM584 141h4v1h-4zM107 142h4v1h-4zM588 142h3v1h-3zM103 143h4v1h-4zM591 143h4v1h-4zM99 144h4v1h-4zM595 144h4v1h-4zM96 145h3v1h-3zM599 145h4v1h-4zM93 146h3v1h-3zM603 146h4v1h-4zM91 147h2v1h-2zM607 147h4v1h-4zM88 148h3v1h-3zM611 148h4v1h-4zM85 149h3v1h-3zM615 149h4v1h-4zM82 150h3v1h-3zM619 150h4v1h-4zM79 151h3v1h-3zM623 151h4v1h-4zM76 152h3v1h-3zM627 152h4v1h-4zM73 153h3v1h-3zM631 153h5v1h-5zM70 154h3v1h-3zM636 154h4v1h-4zM67 155h3v1h-3zM640 155h4v1h-4zM64 156h3v1h-3zM644 156h4v1h-4zM60 157h4v1h-4zM648 157h5v1h-5zM56 158h4v1h-4zM653 158h4v1h-4zM52 159h4v1h-4zM657 159h4v1h-4zM49 160h3v1h-3zM661 160h4v1h-4zM47 161h2v1h-2zM665 161h4v1h-4zM44 162h3v1h-3zM669 162h3v1h-3zM42 163h2v1h-2zM672 163h3v1h-3zM39 164h3v1h-3zM675 164h2v1h-2zM37 165h2v1h-2zM677 165h3v1h-3zM34 166h3v1h-3zM680 166h3v1h-3zM32 167h2v1h-2zM683 167h3v1h-3zM29 168h3v1h-3zM686 168h3v1h-3zM27 169h2v1h-2zM689 169h2v1h-2zM24 170h3v1h-3zM691 170h3v1h-3zM22 171h2v1h-2zM694 171h3v1h-3zM19 172h3v1h-3zM697 172h4v1h-4zM17 173h2v1h-2zM701 173h5v1h-5zM15 174h2v1h-2zM706 174h4v1h-4zM13 175h2v1h-2zM710 175h5v1h-5zM10 176h3v1h-3zM715 176h4v1h-4zM8 177h2v1h-2zM719 177h4v1h-4zM6 178h2v1h-2zM723 178h4v1h-4zM4 179h2v1h-2zM727 179h3v1h-3zM730 180h4v1h-4zM734 181h4v1h-4zM738 182h3v1h-3zM741 183h4v1h-4zM745 184h4v1h-4zM749 185h4v1h-4zM753 186h5v1h-5zM758 187h5v1h-5zM763 188h5v1h-5zM768 189h5v1h-5zM773 190h5v1h-5zM778 191h5v1h-5zM783 192h5v1h-5zM788 193h5v1h-5zM793 194h5v1h-5zM798 195h5v1h-5zM803 196h6v1h-6zM809 197h5v1h-5zM814 198h6v1h-6zM820 199h6v1h-6zM826 200h5v1h-5zM831 201h6v1h-6zM837 202h5v1h-5zM842 203h6v1h-6zM848 204h7v1h-7zM855 205h8v1h-8zM863 206h8v1h-8zM871 207h10v1h-10zM881 208h11v1h-11zM892 209h11v1h-11zM903 210h9v1h-9zM912 211h7v1h-7zM919 212h7v1h-7zM926 213h6v1h-6zM932 214h7v1h-7zM939 215h8v1h-8zM947 216h8v1h-8zM955 217h8v1h-8zM963 218h8v1h-8zM971 219h9v1h-9zM980 220h8v1h-8zM988 221h8v1h-8zM996 222h8v1h-8zM1004 223h10v1h-10zM1014 224h10v1h-10zM1024 225h10v1h-10zM1034 226h6v1h-6z" fill="#00ff00"/>
<path d="M876 167h50v1h-50zM838 168h38v1h-38zM926 168h37v1h-37zM813 169h25v1h-25zM963 169h25v1h-25zM788 170h25v1h-25zM988 170h32v1h-32zM763 171h25v1h-25zM1020 171h20v1h-20zM744 172h19v1h-19zM732 173h12v1h-12zM719 174h13v1h-13zM707 175h12v1h-12zM685 176h22v1h-22zM661 177h24v1h-24zM603 178h58v1h-58zM588 179h15v1h-15zM557 180h31v1h-31zM533 181h24v1h-24zM517 182h16v1h-16zM499 183h18v1h-18zM479 184h20v1h-20zM463 185h16v1h-16zM452 186h11v1h-11zM441 187h11v1h-11zM431 188h10v1h-10zM423 189h8v1h-8zM415 190h8v1h-8zM407 191h8v1h-8zM398 192h9v1h-9zM390 193h8v1h-8zM381 194h9v1h-9zM373 195h8v1h-8zM366 196h7v1h-7zM360 197h6v1h-6zM354 198h6v1h-6zM344 199h10v1h-10zM332 200h12v1h-12zM319 201h13v1h-13zM307 202h12v1h-12zM296 203h11v1h-11zM288 204h8v1h-8zM280 205h8v1h-8zM271 206h9v1h-9zM263 207h8v1h-8zM255 208h8v1h-8zM246 209h9v1h-9zM238 210h8v1h-8zM230 211h8v1h-8zM221 212h9v1h-9zM213 213h8v1h-8zM205 214h8v1h-8zM197 215h8v1h-8zM190 216h7v1h-7zM183 217h7v1h-7zM176 218h7v1h-7zM168 219h8v1h-8zM161 220h7v1h-7zM154 221h7v1h-7zM147 222h7v1h-7zM141 223h6v1h-6zM135 224h6v1h-6zM129 225h6v1h-6zM122 226h7v1h-7zM116 227h6v1h-6zM110 228h6v1h-6zM104 229h6v1h-6zM98 230h6v1h-6zM92 231h6v1h-6zM87 232h5v1h-5zM81 233h6v1h-6zM76 234h5v1h-5zM70 235h6v1h-6zM64 236h6v1h-6zM59 237h5v1h-5zM53 238h6v1h-6zM48 239h5v1h-5zM43 240h5v1h-5zM38 241h5v1h-5zM33 242h5v1h-5zM28 243h5v1h-5zM22 244h6v1h-6zM17 245h5v1h-5zM12 246h5v1h-5zM7 247h5v1h-5zM4 248h3v1h-3z" fill="#c0c0c0"/>
<path d="M999 234h41v1h-41zM976 235h23v1h-23zM952 236h24v1h-24zM929 237h23v1h-23zM904 238h25v1h-25zM882 239h22v1h-22zM848 240h34v1h-34zM824 241h24v1h-24zM802 242h22v1h-22zM778 243h24v1h-24zM743 244h35v1h-35zM732 245h11v1h-11zM720 246h12v1h-12zM695 247h25v1h-25zM686 248h9v1h-9zM673 249h13v1h-13zM659 250h14v1h-14zM653 251h6v1h-6zM644 252h9v1h-9zM632 253h12v1h-12zM619 254h13v1h-13zM607 255h12v1h-12zM587 256h20v1h-20zM577 257h10v1h-10zM566 258h11v1h-11zM556 259h10v1h-10zM544 260h12v1h-12zM532 261h12v1h-12zM519 262h13v1h-13zM507 263h12v1h-12zM494 264h13v1h-13zM482 265h12v1h-12zM469 266h13v1h-13zM457 267h12v1h-12zM446 268h11v1h-11zM436 269h10v1h-10zM426 270h10v1h-10zM416 271h10v1h-10zM406 272h10v1h-10zM396 273h10v1h-10zM386 274h10v1h-10zM376 275h10v1h-10zM366 276h10v1h-10zM356 277h10v1h-10zM346 278h10v1h-10zM338 279h8v1h-8zM330 280h8v1h-8zM321 281h9v1h-9zM313 282h8v1h-8zM305 283h8v1h-8zM296 284h9v1h-9zM286 285h10v1h-10zM276 286h10v1h-10zM266 287h10v1h-10zM256 288h10v1h-10zM246 289h10v1h-10zM236 290h10v1h-10zM226 291h10v1h-10zM216 292h10v1h-10zM206 293h10v1h-10zM195 294h11v1h-11zM184 295h11v1h-11zM173 296h11v1h-11zM163 297h10v1h-10zM155 298h8v1h-8zM142 299h13v1h-13zM129 300h13v1h-13zM121 301h8v1h-8zM113 302h8v1h-8zM105 303h8v1h-8zM95 304h10v1h-10zM84 305h11v1h-11zM73 306h11v1h-11zM65 307h8v1h-8zM59 308h6v1h-6zM51 309h8v1h-8zM45 310h6v1h-6zM33 311h12v1h-12zM24 312h9v1h-9zM18 313h6v1h-6zM10 314h8v1h-8zM4 315h6v1h-6z" fill="#0000ff"/>
<path d="M13 403h9v1h-9zM34 403h8v1h-8zM7 404h6v1h-6zM22 404h12v1h-12zM42 404h6v1h-6zM4 405h3v1h-3zM48 405h6v1h-6zM54 406h6v1h-6zM60 407h5v1h-5zM65 408h4v1h-4zM69 409h4v1h-4zM73 410h7v1h-7zM80 411h8v1h-8zM88 412h4v1h-4zM92 413h4v1h-4zM96 414h5v1h-5zM101 415h6v1h-6zM107 416h8v1h-8zM115 417h8v1h-8zM123 418h4v1h-4zM127 419h4v1h-4zM131 420h3v1h-3zM134 421h4v1h-4zM138 422h4v1h-4zM142 423h8v1h-8zM150 424h8v1h-8zM158 425h4v1h-4zM162 426h4v1h-4zM166 427h15v1h-15zM181 428h4v1h-4zM185 429h4v1h-4zM189 430h5v1h-5zM194 431h6v1h-6zM200 432h8v1h-8zM220 432h43v1h-43zM208 433h12v1h-12zM263 433h6v1h-6zM269 434h21v1h-21zM290 435h11v1h-11zM301 436h9v1h-9zM310 437h6v1h-6zM383 437h20v1h-20zM316 438h9v1h-9zM363 438h20v1h-20zM403 438h6v1h-6zM325 439h11v1h-11zM357 439h6v1h-6zM409 439h6v1h-6zM336 440h21v1h-21zM415 440h6v1h-6zM421 441h5v1h-5zM426 442h6v1h-6zM432 443h6v1h-6zM438 444h6v1h-6zM444 445h6v1h-6zM450 446h6v1h-6zM456 447h4v1h-4zM460 448h4v1h-4zM464 449h4v1h-4zM468 450h4v1h-4zM472 451h4v1h-4zM476 452h4v1h-4zM480 453h4v1h-4zM484 454h4v1h-4zM488 455h4v1h-4zM492 456h3v1h-3zM495 457h4v1h-4zM499 458h4v1h-4zM503 459h8v1h-8zM511 460h23v1h-23zM534 461h12v1h-12zM546 462h8v1h-8zM554 463h6v1h-6zM560 464h9v1h-9zM569 465h9v1h-9zM578 466h6v1h-6zM805 466h40v1h-40zM941 466h58v1h-58zM584 467h4v1h-4zM799 467h6v1h-6zM845 467h6v1h-6zM918 467h23v1h-23zM999 467h9v1h-9zM588 468h4v1h-4zM793 468h6v1h-6zM851 468h9v1h-9zM898 468h20v1h-20zM1008 468h6v1h-6zM592 469h4v1h-4zM787 469h6v1h-6zM860 469h11v1h-11zM892 469h6v1h-6zM1014 469h9v1h-9zM596 470h8v1h-8zM778 470h9v1h-9zM871 470h21v1h-21zM1023 470h17v1h-17zM604 471h11v1h-11zM767 471h11v1h-11zM615 472h12v1h-12zM755 472h12v1h-12zM627 473h9v1h-9zM746 473h9v1h-9zM636 474h6v1h-6zM740 474h6v1h-6zM642 475h8v1h-8zM735 475h5v1h-5zM650 476h12v1h-12zM729 476h6v1h-6zM662 477h12v1h-12zM720 477h9v1h-9zM674 478h11v1h-11zM697 478h23v1h-23zM685 479h12v1h-12z" fill="#c0c0c0"/>
<path d="M69 413h46v1h-46zM57 414h12v1h-12zM115 414h23v1h-23zM45 415h12v1h-12zM138 415h12v1h-12zM34 416h11v1h-11zM150 416h12v1h-12zM22 417h12v1h-12zM162 417h11v1h-11zM13 418h9v1h-9zM173 418h12v1h-12zM7 419h6v1h-6zM185 419h12v1h-12zM4 420h3v1h-3zM197 420h8v1h-8zM205 421h6v1h-6zM211 422h9v1h-9zM220 423h12v1h-12zM232 424h23v1h-23zM255 425h11v1h-11zM266 426h12v1h-12zM278 427h23v1h-23zM301 428h12v1h-12zM313 429h12v1h-12zM325 430h11v1h-11zM336 431h12v1h-12zM348 432h12v1h-12zM360 433h34v1h-34zM394 434h24v1h-24zM418 435h11v1h-11zM429 436h12v1h-12zM441 437h12v1h-12zM453 438h11v1h-11zM464 439h12v1h-12zM476 440h9v1h-9zM485 441h6v1h-6zM491 442h8v1h-8zM499 443h9v1h-9zM508 444h6v1h-6zM514 445h8v1h-8zM522 446h9v1h-9zM531 447h6v1h-6zM537 448h9v1h-9zM546 449h11v1h-11zM557 450h9v1h-9zM566 451h6v1h-6zM572 452h9v1h-9zM581 453h8v1h-8zM589 454h6v1h-6zM595 455h9v1h-9zM604 456h8v1h-8zM612 457h6v1h-6zM618 458h9v1h-9zM627 459h9v1h-9zM636 460h6v1h-6zM642 461h8v1h-8zM650 462h9v1h-9zM659 463h6v1h-6zM665 464h9v1h-9zM674 465h11v1h-11zM685 466h12v1h-12zM697 467h9v1h-9zM999 467h12v1h-12zM706 468h6v1h-6zM930 468h69v1h-69zM1011 468h29v1h-29zM712 469h20v1h-20zM813 469h117v1h-117zM732 470h81v1h-81z" fill="#00ff00"/>
<path d="M103 433h165v1h-165zM80 434h23v1h-23zM268 434h68v1h-68zM57 435h23v1h-23zM336 435h82v1h-82zM45 436h12v1h-12zM418 436h23v1h-23zM33 437h12v1h-12zM441 437h23v1h-23zM22 438h11v1h-11zM464 438h12v1h-12zM13 439h9v1h-9zM476 439h11v1h-11zM7 440h6v1h-6zM487 440h12v1h-12zM4 441h3v1h-3zM499 441h23v1h-23zM522 442h12v1h-12zM534 443h12v1h-12zM546 444h23v1h-23zM569 445h12v1h-12zM581 446h11v1h-11zM592 447h11v1h-11zM603 448h12v1h-12zM615 449h12v1h-12zM627 450h11v1h-11zM638 451h12v1h-12zM650 452h12v1h-12zM662 453h12v1h-12zM674 454h11v1h-11zM685 455h24v1h-24zM709 456h11v1h-11zM720 457h35v1h-35zM755 458h58v1h-58zM813 459h35v1h-35zM848 460h23v1h-23zM871 461h82v1h-82zM953 462h58v1h-58zM1011 463h29v1h-29z" fill="#ff00ff"/>
<path d="M371 441h47v1h-47zM243 442h128v1h-128zM418 442h45v1h-45zM173 443h70v1h-70zM463 443h24v1h-24zM138 444h35v1h-35zM487 444h24v1h-24zM103 445h35v1h-35zM511 445h35v1h-35zM80 446h23v1h-23zM546 446h23v1h-23zM68 447h12v1h-12zM569 447h23v1h-23zM45 448h23v1h-23zM592 448h11v1h-11zM33 449h12v1h-12zM603 449h24v1h-24zM22 450h11v1h-11zM627 450h11v1h-11zM13 451h9v1h-9zM638 451h24v1h-24zM7 452h6v1h-6zM662 452h12v1h-12zM4 453h3v1h-3zM674 453h23v1h-23zM697 454h23v1h-23zM720 455h35v1h-35zM755 456h70v1h-70zM825 457h35v1h-35zM860 458h58v1h-58zM918 459h70v1h-70zM988 460h46v1h-46zM1034 461h6v1h-6z" fill="#00ffff"/>
<path d="M533 468h48v1h-48zM405 469h128v1h-128zM581 469h459v1h-459zM359 470h46v1h-46zM324 471h35v1h-35zM277 472h47v1h-47zM243 473h34v1h-34zM208 474h35v1h-35zM173 475h35v1h-35zM138 476h35v1h-35zM115 477h23v1h-23zM92 478h23v1h-23zM68 479h24v1h-24zM45 480h23v1h-23zM33 481h12v1h-12zM10 482h23v1h-23zM4 483h6v1h-6z" fill="#c0c0c0"/>
<path d="M929 493h111v1h-111zM801 494h128v1h-128zM650 495h151v1h-151zM510 496h140v1h-140zM417 497h93v1h-93zM359 498h58v1h-58zM302 499h57v1h-57zM254 500h48v1h-48zM196 501h58v1h-58zM149 502h47v1h-47zM103 503h46v1h-46zM68 504h35v1h-35zM33 505h35v1h-35zM4 506h29v1h-29z" fill="#0000ff"/>
<rect x="3" y="406" width="3" height="14" fill="#02020c"/>
<path d="M2 405h5v16h-5z M3 406v14h3v-14z" fill="#ff0000" fill-rule="evenodd"/>
<rect x="14" y="404" width="3" height="14" fill="#02020c"/>
<path d="M13 403h5v16h-5z M14 404v14h3v-14z" fill="#ff0000" fill-rule="evenodd"/>
<rect x="26" y="405" width="3" height="12" fill="#02020c"/>
<path d="M25 404h5v14h-5z M26 405v12h3v-12z" fill="#ff0000" fill-rule="evenodd"/>
<rect x="38" y="404" width="3" height="12" fill="#02020c"/>
<path d="M37 403h5v14h-5z M38 404v12h3v-12z" fill="#ff0000" fill-rule="evenodd"/>
<rect x="49" y="406" width="3" height="9" fill="#02020c"/>
<path d="M48 405h5v11h-5z M49 406v9h3v-9z" fill="#ff0000" fill-rule="evenodd"/>
<rect x="61" y="408" width="3" height="6" fill="#02020c"/>
<path d="M60 407h5v8h-5z M61 408v6h3v-6z" fill="#ff0000" fill-rule="evenodd"/>
<rect x="73" y="411" width="3" height="2" fill="#02020c"/>
<path d="M72 410h5v4h-5z M73 411v2h3v-2z" fill="#ff0000" fill-rule="evenodd"/>
<rect x="84" y="412" width="3" height="1" fill="#02020c"/>
<path d="M83 411h5v3h-5z M84 412v1h3v-1z" fill="#ff0000" fill-rule="evenodd"/>
<rect x="95" y="413" width="5" height="2" fill="#00ff00"/>
<rect x="108" y="414" width="3" height="2" fill="#02020c"/>
<path d="M107 413h5v4h-5z M108 414v2h3v-2z" fill="#00ff00" fill-rule="evenodd"/>
<rect x="119" y="415" width="3" height="2" fill="#02020c"/>
<path d="M118 414h5v4h-5z M119 415v2h3v-2z" fill="#00ff00" fill-rule="evenodd"/>
<rect x="131" y="415" width="3" height="5" fill="#02020c"/>
<path d="M130 414h5v7h-5z M131 415v5h3v-5z" fill="#00ff00" fill-rule="evenodd"/>
<rect x="142" y="416" width="3" height="7" fill="#02020c"/>
<path d="M141 415h5v9h-5z M142 416v7h3v-7z" fill="#00ff00" fill-rule="evenodd"/>
<rect x="154" y="417" width="3" height="7" fill="#02020c"/>
<path d="M153 416h5v9h-5z M154 417v7h3v-7z" fill="#00ff00" fill-rule="evenodd"/>
<rect x="166" y="418" width="3" height="9" fill="#02020c"/>
<path d="M165 417h5v11h-5z M166 418v9h3v-9z" fill="#00ff00" fill-rule="evenodd"/>
<rect x="177" y="419" width="3" height="8" fill="#02020c"/>
<path d="M176 418h5v10h-5z M177 419v8h3v-8z" fill="#00ff00" fill-rule="evenodd"/>
<rect x="189" y="420" width="3" height="10" fill="#02020c"/>
<path d="M188 419h5v12h-5z M189 420v10h3v-10z" fill="#00ff00" fill-rule="evenodd"/>
<rect x="201" y="421" width="3" height="11" fill="#02020c"/>
<path d="M200 420h5v13h-5z M201 421v11h3v-11z" fill="#00ff00" fill-rule="evenodd"/>
<rect x="212" y="423" width="3" height="10" fill="#02020c"/>
<path d="M211 422h5v12h-5z M212 423v10h3v-10z" fill="#00ff00" fill-rule="evenodd"/>
<rect x="224" y="424" width="3" height="8" fill="#02020c"/>
<path d="M223 423h5v10h-5z M224 424v8h3v-8z" fill="#00ff00" fill-rule="evenodd"/>
<rect x="236" y="425" width="3" height="7" fill="#02020c"/>
<path d="M235 424h5v9h-5z M236 425v7h3v-7z" fill="#00ff00" fill-rule="evenodd"/>
<rect x="247" y="425" width="3" height="7" fill="#02020c"/>
<path d="M246 424h5v9h-5z M247 425v7h3v-7z" fill="#00ff00" fill-rule="evenodd"/>
<rect x="259" y="426" width="3" height="6" fill="#02020c"/>
<path d="M258 425h5v8h-5z M259 426v6h3v-6z" fill="#00ff00" fill-rule="evenodd"/>
<rect x="270" y="427" width="3" height="7" fill="#02020c"/>
<path d="M269 426h5v9h-5z M270 427v7h3v-7z" fill="#00ff00" fill-rule="evenodd"/>
<rect x="282" y="428" width="3" height="6" fill="#02020c"/>
<path d="M281 427h5v8h-5z M282 428v6h3v-6z" fill="#00ff00" fill-rule="evenodd"/>
<rect x="294" y="428" width="3" height="7" fill="#02020c"/>
<path d="M293 427h5v9h-5z M294 428v7h3v-7z" fill="#00ff00" fill-rule="evenodd"/>
<rect x="305" y="429" width="3" height="7" fill="#02020c"/>
<path d="M304 428h5v9h-5z M305 429v7h3v-7z" fill="#00ff00" fill-rule="evenodd"/>
<rect x="317" y="430" width="3" height="8" fill="#02020c"/>
<path d="M316 429h5v10h-5z M317 430v8h3v-8z" fill="#00ff00" fill-rule="evenodd"/>
<rect x="329" y="431" width="3" height="8" fill="#02020c"/>
<path d="M328 430h5v10h-5z M329 431v8h3v-8z" fill="#00ff00" fill-rule="evenodd"/>
<rect x="340" y="432" width="3" height="8" fill="#02020c"/>
<path d="M339 431h5v10h-5z M340 432v8h3v-8z" fill="#00ff00" fill-rule="evenodd"/>
<rect x="352" y="433" width="3" height="7" fill="#02020c"/>
<path d="M351 432h5v9h-5z M352 433v7h3v-7z" fill="#00ff00" fill-rule="evenodd"/>
<rect x="364" y="434" width="3" height="4" fill="#02020c"/>
<path d="M363 433h5v6h-5z M364 434v4h3v-4z" fill="#00ff00" fill-rule="evenodd"/>
<rect x="375" y="434" width="3" height="4" fill="#02020c"/>
<path d="M374 433h5v6h-5z M375 434v4h3v-4z" fill="#00ff00" fill-rule="evenodd"/>
<rect x="387" y="434" width="3" height="3" fill="#02020c"/>
<path d="M386 433h5v5h-5z M387 434v3h3v-3z" fill="#00ff00" fill-rule="evenodd"/>
<rect x="398" y="435" width="3" height="2" fill="#02020c"/>
<path d="M397 434h5v4h-5z M398 435v2h3v-2z" fill="#00ff00" fill-rule="evenodd"/>
<rect x="410" y="435" width="3" height="4" fill="#02020c"/>
<path d="M409 434h5v6h-5z M410 435v4h3v-4z" fill="#00ff00" fill-rule="evenodd"/>
<rect x="422" y="436" width="3" height="5" fill="#02020c"/>
<path d="M421 435h5v7h-5z M422 436v5h3v-5z" fill="#00ff00" fill-rule="evenodd"/>
<rect x="433" y="437" width="3" height="6" fill="#02020c"/>
<path d="M432 436h5v8h-5z M433 437v6h3v-6z" fill="#00ff00" fill-rule="evenodd"/>
<rect x="445" y="438" width="3" height="7" fill="#02020c"/>
<path d="M444 437h5v9h-5z M445 438v7h3v-7z" fill="#00ff00" fill-rule="evenodd"/>
<rect x="457" y="439" width="3" height="8" fill="#02020c"/>
<path d="M456 438h5v10h-5z M457 439v8h3v-8z" fill="#00ff00" fill-rule="evenodd"/>
<rect x="468" y="440" width="3" height="10" fill="#02020c"/>
<path d="M467 439h5v12h-5z M468 440v10h3v-10z" fill="#00ff00" fill-rule="evenodd"/>
<rect x="480" y="441" width="3" height="12" fill="#02020c"/>
<path d="M479 440h5v14h-5z M480 441v12h3v-12z" fill="#00ff00" fill-rule="evenodd"/>
<rect x="492" y="443" width="3" height="13" fill="#02020c"/>
<path d="M491 442h5v15h-5z M492 443v13h3v-13z" fill="#00ff00" fill-rule="evenodd"/>
<rect x="503" y="444" width="3" height="15" fill="#02020c"/>
<path d="M502 443h5v17h-5z M503 444v15h3v-15z" fill="#00ff00" fill-rule="evenodd"/>
<rect x="515" y="446" width="3" height="14" fill="#02020c"/>
<path d="M514 445h5v16h-5z M515 446v14h3v-14z" fill="#00ff00" fill-rule="evenodd"/>
<rect x="526" y="447" width="3" height="13" fill="#02020c"/>
<path d="M525 446h5v15h-5z M526 447v13h3v-13z" fill="#00ff00" fill-rule="evenodd"/>
<rect x="538" y="449" width="3" height="12" fill="#02020c"/>
<path d="M537 448h5v14h-5z M538 449v12h3v-12z" fill="#00ff00" fill-rule="evenodd"/>
<rect x="550" y="450" width="3" height="12" fill="#02020c"/>
<path d="M549 449h5v14h-5z M550 450v12h3v-12z" fill="#00ff00" fill-rule="evenodd"/>
<rect x="561" y="451" width="3" height="13" fill="#02020c"/>
<path d="M560 450h5v15h-5z M561 451v13h3v-13z" fill="#00ff00" fill-rule="evenodd"/>
<rect x="573" y="453" width="3" height="12" fill="#02020c"/>
<path d="M572 452h5v14h-5z M573 453v12h3v-12z" fill="#00ff00" fill-rule="evenodd"/>
<rect x="585" y="454" width="3" height="13" fill="#02020c"/>
<path d="M584 453h5v15h-5z M585 454v13h3v-13z" fill="#00ff00" fill-rule="evenodd"/>
<rect x="596" y="456" width="3" height="14" fill="#02020c"/>
<path d="M595 455h5v16h-5z M596 456v14h3v-14z" fill="#00ff00" fill-rule="evenodd"/>
<rect x="608" y="457" width="3" height="14" fill="#02020c"/>
<path d="M607 456h5v16h-5z M608 457v14h3v-14z" fill="#00ff00" fill-rule="evenodd"/>
<rect x="619" y="459" width="3" height="13" fill="#02020c"/>
<path d="M618 458h5v15h-5z M619 459v13h3v-13z" fill="#00ff00" fill-rule="evenodd"/>
<rect x="631" y="460" width="3" height="13" fill="#02020c"/>
<path d="M630 459h5v15h-5z M631 460v13h3v-13z" fill="#00ff00" fill-rule="evenodd"/>
<rect x="643" y="462" width="3" height="13" fill="#02020c"/>
<path d="M642 461h5v15h-5z M643 462v13h3v-13z" fill="#00ff00" fill-rule="evenodd"/>
<rect x="654" y="463" width="3" height="13" fill="#02020c"/>
<path d="M653 462h5v15h-5z M654 463v13h3v-13z" fill="#00ff00" fill-rule="evenodd"/>
<rect x="666" y="465" width="3" height="12" fill="#02020c"/>
<path d="M665 464h5v14h-5z M666 465v12h3v-12z" fill="#00ff00" fill-rule="evenodd"/>
<rect x="678" y="466" width="3" height="12" fill="#02020c"/>
<path d="M677 465h5v14h-5z M678 466v12h3v-12z" fill="#00ff00" fill-rule="evenodd"/>
<rect x="689" y="467" width="3" height="12" fill="#02020c"/>
<path d="M688 466h5v14h-5z M689 467v12h3v-12z" fill="#00ff00" fill-rule="evenodd"/>
<rect x="701" y="468" width="3" height="10" fill="#02020c"/>
<path d="M700 467h5v12h-5z M701 468v10h3v-10z" fill="#00ff00" fill-rule="evenodd"/>
<rect x="713" y="470" width="3" height="8" fill="#02020c"/>
<path d="M712 469h5v10h-5z M713 470v8h3v-8z" fill="#00ff00" fill-rule="evenodd"/>
<rect x="724" y="470" width="3" height="7" fill="#02020c"/>
<path d="M723 469h5v9h-5z M724 470v7h3v-7z" fill="#00ff00" fill-rule="evenodd"/>
<rect x="736" y="471" width="3" height="4" fill="#02020c"/>
<path d="M735 470h5v6h-5z M736 471v4h3v-4z" fill="#00ff00" fill-rule="evenodd"/>
<rect x="747" y="471" width="3" height="2" fill="#02020c"/>
<path d="M746 470h5v4h-5z M747 471v2h3v-2z" fill="#00ff00" fill-rule="evenodd"/>
<rect x="759" y="471" width="3" height="1" fill="#02020c"/>
<path d="M758 470h5v3h-5z M759 471v1h3v-1z" fill="#00ff00" fill-rule="evenodd"/>
<rect x="770" y="470" width="5" height="2" fill="#00ff00"/>
<rect x="781" y="470" width="5" height="1" fill="#ff0000"/>
<rect x="794" y="469" width="3" height="1" fill="#02020c"/>
<path d="M793 468h5v3h-5z M794 469v1h3v-1z" fill="#ff0000" fill-rule="evenodd"/>
<rect x="806" y="467" width="3" height="3" fill="#02020c"/>
<path d="M805 466h5v5h-5z M806 467v3h3v-3z" fill="#ff0000" fill-rule="evenodd"/>
<rect x="817" y="467" width="3" height="2" fill="#02020c"/>
<path d="M816 466h5v4h-5z M817 467v2h3v-2z" fill="#ff0000" fill-rule="evenodd"/>
<rect x="829" y="467" width="3" height="2" fill="#02020c"/>
<path d="M828 466h5v4h-5z M829 467v2h3v-2z" fill="#ff0000" fill-rule="evenodd"/>
<rect x="841" y="467" width="3" height="2" fill="#02020c"/>
<path d="M840 466h5v4h-5z M841 467v2h3v-2z" fill="#ff0000" fill-rule="evenodd"/>
<rect x="851" y="468" width="5" height="2" fill="#ff0000"/>
<rect x="863" y="469" width="5" height="1" fill="#00ff00"/>
<rect x="874" y="469" width="5" height="2" fill="#00ff00"/>
<rect x="886" y="469" width="5" height="2" fill="#00ff00"/>
<rect x="898" y="468" width="5" height="2" fill="#ff0000"/>
<rect x="909" y="468" width="5" height="2" fill="#ff0000"/>
<rect x="922" y="468" width="3" height="1" fill="#02020c"/>
<path d="M921 467h5v3h-5z M922 468v1h3v-1z" fill="#ff0000" fill-rule="evenodd"/>
<rect x="933" y="467" width="5" height="2" fill="#ff0000"/>
<rect x="945" y="467" width="3" height="1" fill="#02020c"/>
<path d="M944 466h5v3h-5z M945 467v1h3v-1z" fill="#ff0000" fill-rule="evenodd"/>
<rect x="957" y="467" width="3" height="1" fill="#02020c"/>
<path d="M956 466h5v3h-5z M957 467v1h3v-1z" fill="#ff0000" fill-rule="evenodd"/>
<rect x="969" y="467" width="3" height="1" fill="#02020c"/>
<path d="M968 466h5v3h-5z M969 467v1h3v-1z" fill="#ff0000" fill-rule="evenodd"/>
<rect x="980" y="467" width="3" height="1" fill="#02020c"/>
<path d="M979 466h5v3h-5z M980 467v1h3v-1z" fill="#ff0000" fill-rule="evenodd"/>
<rect x="992" y="467" width="3" height="1" fill="#02020c"/>
<path d="M991 466h5v3h-5z M992 467v1h3v-1z" fill="#ff0000" fill-rule="evenodd"/>
<rect x="1002" y="467" width="5" height="1" fill="#ff0000"/>
<rect x="1014" y="468" width="5" height="2" fill="#00ff00"/>
<rect x="1027" y="469" width="3" height="1" fill="#02020c"/>
<path d="M1026 468h5v3h-5z M1027 469v1h3v-1z" fill="#00ff00" fill-rule="evenodd"/>
<rect x="1038" y="469" width="3" height="1" fill="#02020c"/>
<path d="M1037 468h5v3h-5z M1038 469v1h3v-1z" fill="#00ff00" fill-rule="evenodd"/>
<rect x="4" y="521" width="6" height="1" fill="#707070"/>
<rect x="1048" y="10" width="1" height="1" fill="#a8a8a8"/>
<rect x="1049" y="9" width="1" height="1" fill="#a8a8a8"/>
<rect x="1049" y="11" width="1" height="1" fill="#a8a8a8"/>
<rect x="15" y="22" width="1" height="4" fill="#c8c8c8"/>
<rect x="16" y="22" width="3" height="1" fill="#c8c8c8"/>
<rect x="16" y="24" width="4" height="1" fill="#c8c8c8"/>
<rect x="20" y="25" width="3" height="1" fill="#c8c8c8"/>
<rect x="23" y="26" width="3" height="1" fill="#c8c8c8"/>
<rect x="26" y="27" width="1" height="1" fill="#c8c8c8"/>
<rect x="16" y="26" width="1" height="1" fill="#c8c8c8"/>
<rect x="17" y="27" width="1" height="1" fill="#c8c8c8"/>
<rect x="690" y="282" width="12" height="1" fill="#c8c8c8"/>
<rect x="690" y="281" width="1" height="3" fill="#c8c8c8"/>
<rect x="691" y="281" width="1" height="1" fill="#c8c8c8"/>
<rect x="692" y="280" width="2" height="1" fill="#c8c8c8"/>
<rect x="691" y="283" width="1" height="1" fill="#c8c8c8"/>
<rect x="692" y="284" width="1" height="1" fill="#c8c8c8"/>
<rect x="693" y="285" width="1" height="1" fill="#c8c8c8"/></svg>
<span class="t" style="left:1.6px;top:2px;color:#c8c8c8;"><span class="c">青农商行</span><span style="margin-left:2.4px">(</span><span class="c">日线</span>)</span><svg style="position:absolute;left:90px;top:4px" width="12" height="12" viewBox="0 0 12 12"><circle cx="6" cy="6" r="5.7" fill="#6a6a6a"/><path d="M3.2 4.8 L6 7.6 L8.8 4.8" stroke="#101010" stroke-width="1.3" fill="none"/></svg><span class="t" style="left:106.3px;top:2px;color:#ffffff;">MA5: 3.22</span><span class="t" style="left:169.3px;top:2px;color:#ffff00;">MA10: 3.25</span><span class="t" style="left:239.3px;top:2px;color:#ff00ff;">MA20: 3.25</span><span class="t" style="left:309.5px;top:2px;color:#00ff00;">MA60: 3.27</span><span class="t" style="left:379.2px;top:2px;color:#c0c0c0;">MA120: 3.44</span><span class="t" style="left:456.7px;top:2px;color:#0000ff;">MA250: 3.25</span><svg style="position:absolute;left:1px;top:336px" width="12" height="12" viewBox="0 0 12 12"><circle cx="6" cy="6" r="5.7" fill="#6a6a6a"/><path d="M3.2 4.8 L6 7.6 L8.8 4.8" stroke="#101010" stroke-width="1.3" fill="none"/></svg><span class="t" style="left:17.4px;top:334px;color:#c8c8c8;"><span class="c">量化买卖副图</span></span><span class="t" style="left:94.5px;top:334px;color:#c0c0c0;letter-spacing:-0.4px;">H1: 3.23</span><span class="t" style="left:146.3px;top:334px;color:#00ff00;letter-spacing:-0.4px;">H2: 3.25</span><span class="t" style="left:198.5px;top:334px;color:#ff00ff;letter-spacing:-0.1px;">M1: 3.29</span><span class="t" style="left:253.4px;top:334px;color:#00ffff;letter-spacing:-0.1px;">M2: 3.31</span><span class="t" style="left:308.3px;top:334px;color:#c0c0c0;letter-spacing:-0.1px;">M3: 3.24</span><span class="t" style="left:363.3px;top:334px;color:#0000ff;letter-spacing:-0.1px;">M4: 3.04</span><span class="t" style="left:28.8px;top:21px;color:#c4c4c4;letter-spacing:-0.5px;">3.89</span><span class="t" style="left:703.3px;top:274px;color:#c4c4c4;letter-spacing:-0.5px;">3.10</span><span class="t" style="left:783px;top:492px;color:#ffff00;"><span class="c">买</span></span><span class="t" style="left:900px;top:492px;color:#ffff00;"><span class="c">买</span></span><span class="tag" style="left:707px;top:319px;background:#008c8c">解</span><span class="tag" style="left:869px;top:319px;background:#103070">财</span><span class="t" style="left:-1.5px;top:321px;color:#ff0000;font-size:11.5px;letter-spacing:0;line-height:12px">S</span><svg style="position:absolute;left:0;top:320px" width="8" height="5" shape-rendering="crispEdges"><path d="M2 1h1v1h-1z M1 2h3v1h-3z M0 3h5v1h-5z" fill="#ff0000"/></svg>
</body></html>
